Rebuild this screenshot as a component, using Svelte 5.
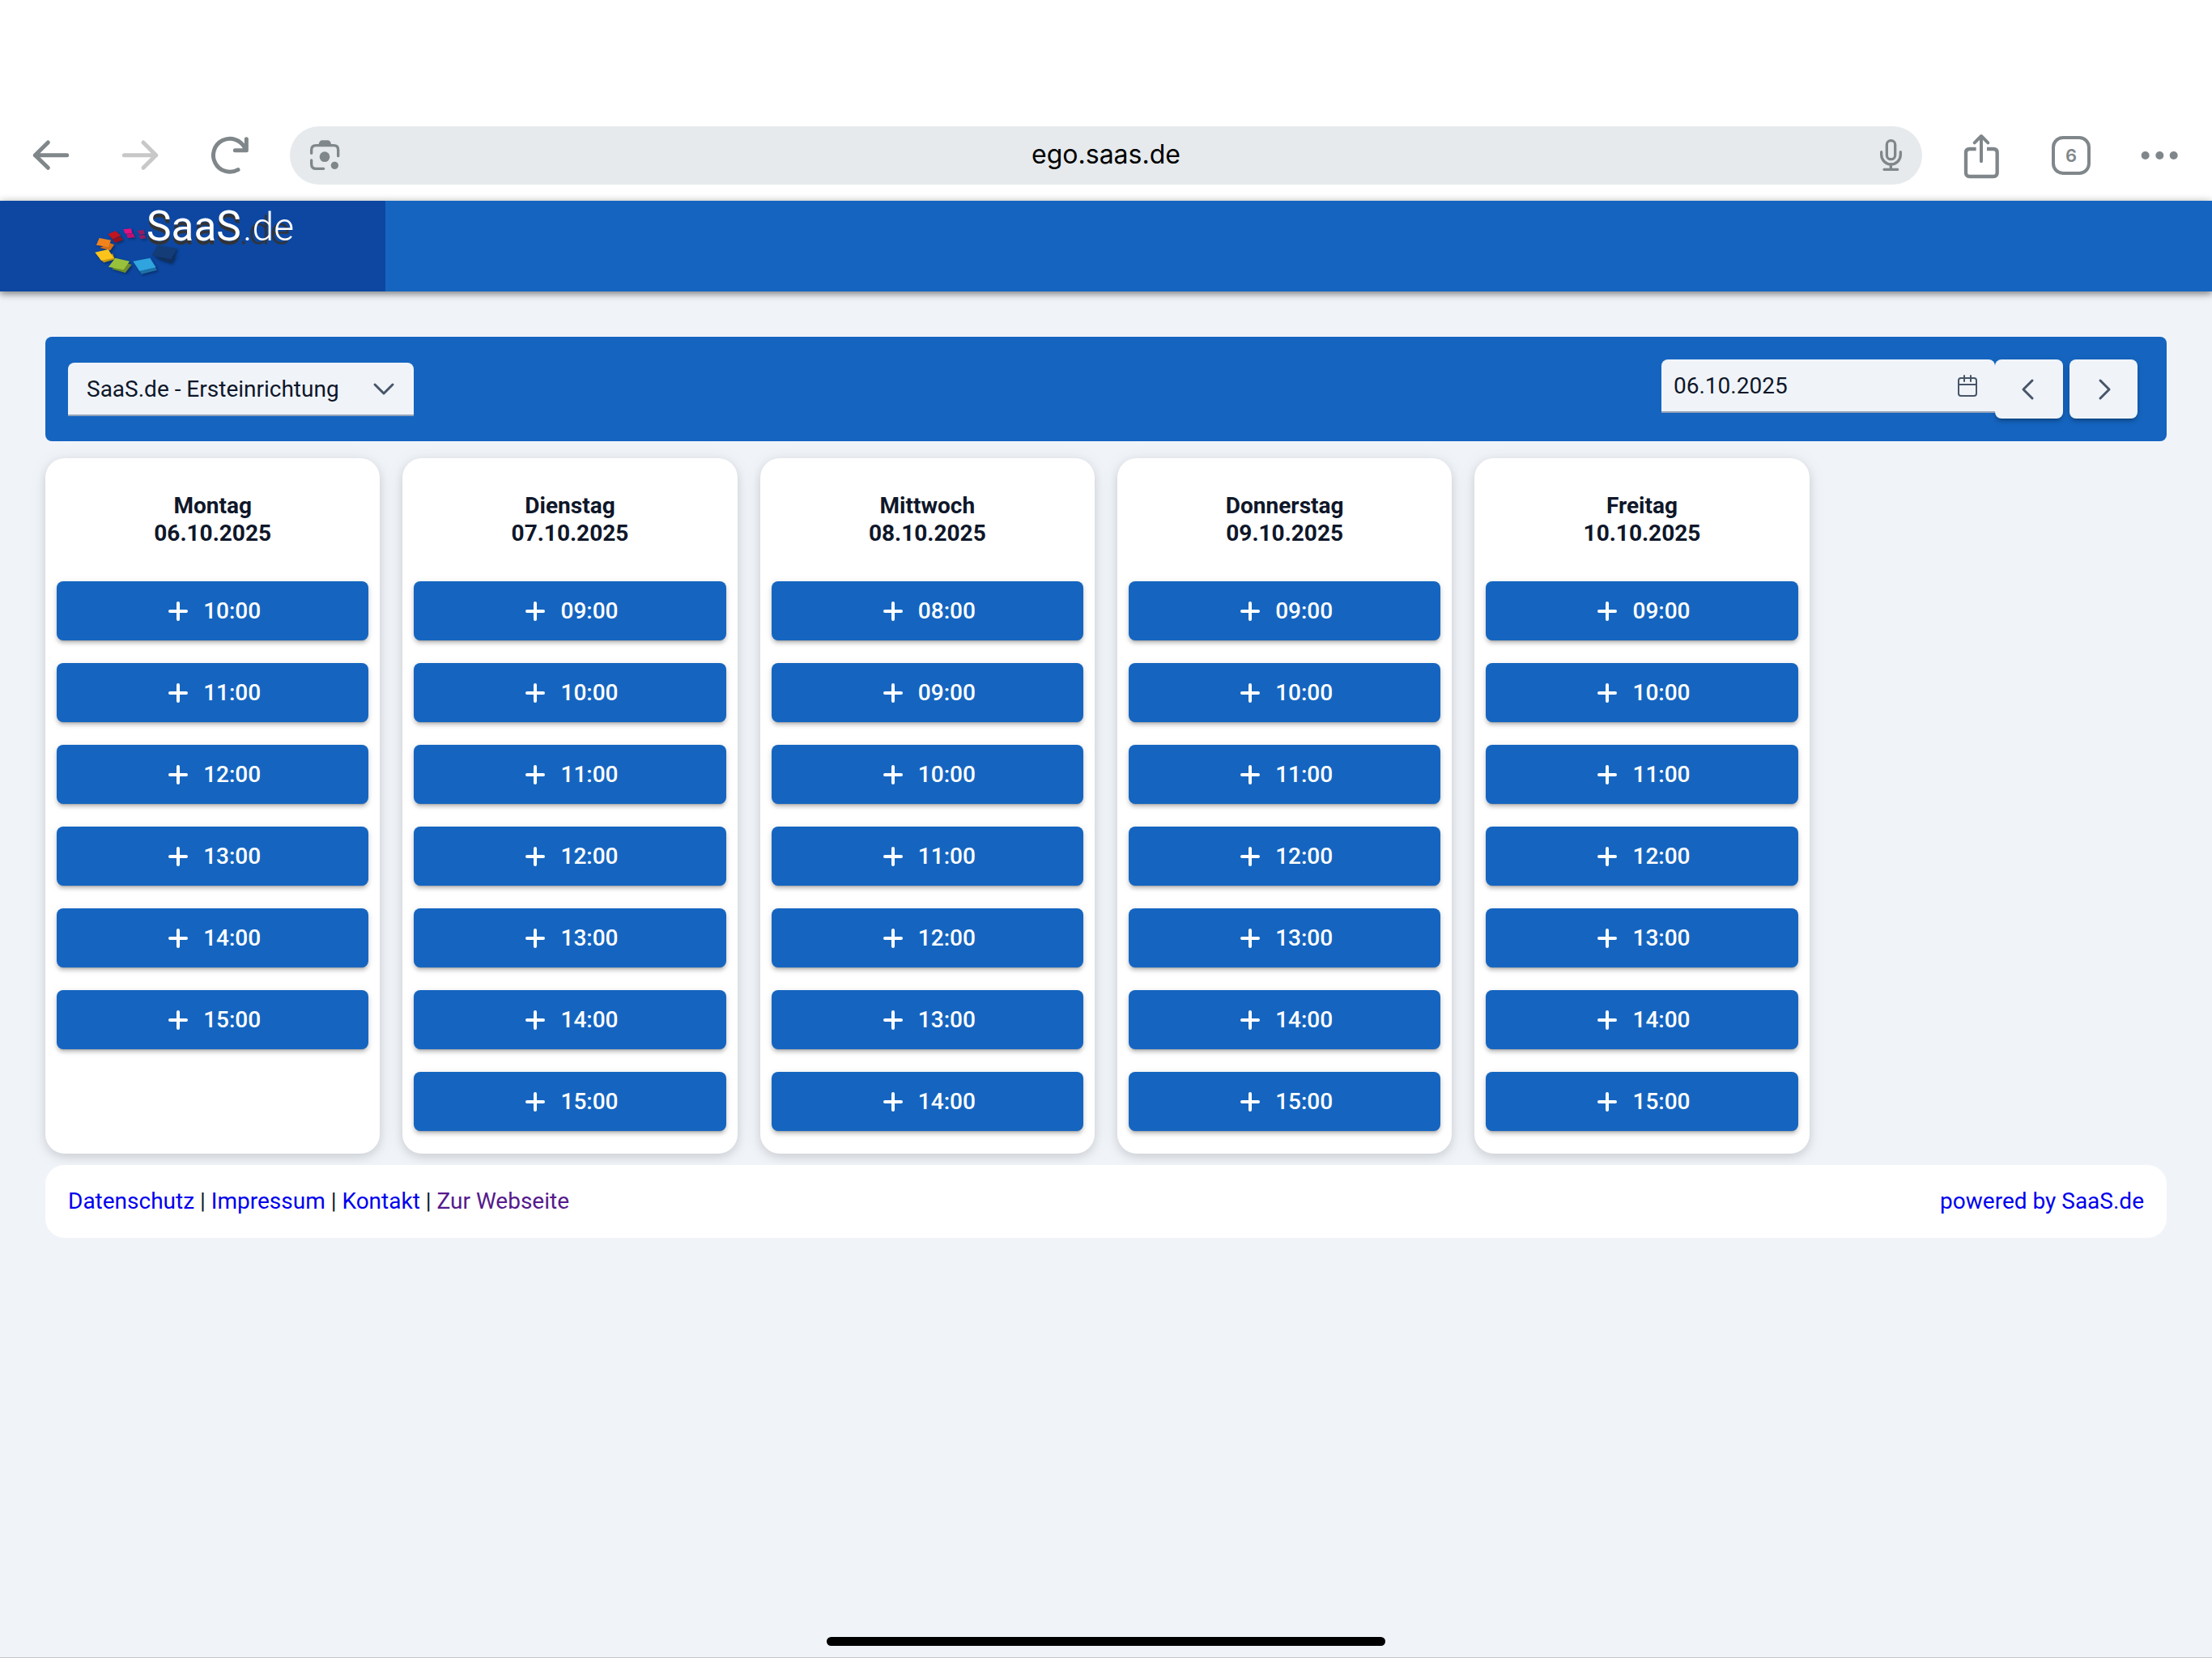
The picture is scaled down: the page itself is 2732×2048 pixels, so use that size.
<script>
  const services = ['SaaS.de - Ersteinrichtung'];
  let service = $state(services[0]);
  let date = $state('06.10.2025');
  let url = $state('ego.saas.de');

  const days = [
    { name: 'Montag', date: '06.10.2025', slots: ['10:00', '11:00', '12:00', '13:00', '14:00', '15:00'] },
    { name: 'Dienstag', date: '07.10.2025', slots: ['09:00', '10:00', '11:00', '12:00', '13:00', '14:00', '15:00'] },
    { name: 'Mittwoch', date: '08.10.2025', slots: ['08:00', '09:00', '10:00', '11:00', '12:00', '13:00', '14:00'] },
    { name: 'Donnerstag', date: '09.10.2025', slots: ['09:00', '10:00', '11:00', '12:00', '13:00', '14:00', '15:00'] },
    { name: 'Freitag', date: '10.10.2025', slots: ['09:00', '10:00', '11:00', '12:00', '13:00', '14:00', '15:00'] }
  ];
</script>

<div class="screen">
  <div class="browser">
    <div class="tools">
      <button class="tool" aria-label="Zurück">
        <svg viewBox="120 84 144 144"><path d="M248 155H130M178 108l-48 47 48 47" /></svg>
      </button>
      <button class="tool off" aria-label="Vorwärts" disabled>
        <svg viewBox="450 84 144 144"><path d="M460 155h118M531 108l47 47-47 47" /></svg>
      </button>
      <button class="tool" aria-label="Neu laden">
        <svg viewBox="780 84 144 144"><path d="M882 209A61.500 61.500 0 1 1 907 128M913 95v42h-42" /></svg>
      </button>
    </div>
    <div class="address">
      <svg class="small" viewBox="1134 96 120 120" aria-hidden="true">
        <path d="M1154 148v-12q0-17 17-17h66q16 0 16 17v22M1154 174v14q0 17 17 17h28" />
        <path class="solid" d="M1180 116q4-16 14-16h20q10 0 14 16z" />
        <circle class="solid" cx="1203" cy="161" r="19" />
        <circle class="solid" cx="1240" cy="193" r="14" />
      </svg>
      <input class="url" type="text" aria-label="Adresse" bind:value={url} />
      <svg class="small" viewBox="162 96 120 120" aria-hidden="true">
        <rect x="211" y="101" width="31" height="69" rx="15" />
        <path d="M191 143v10a35.500 36 0 0 0 71 0v-10M226 189v18M201 208h50" />
      </svg>
    </div>
    <div class="tools">
      <button class="tool" aria-label="Teilen">
        <svg viewBox="492 84 144 144">
          <path class="mid" d="M536 109l25-25 25 25M561 87v91" />
          <path class="butt" d="M542 132h-24q-14 0-14 14v74q0 14 14 14h88q14 0 14-14v-74q0-14-14-14h-24" />
        </svg>
      </button>
      <button class="tool tabs" aria-label="Tabs: 6">6</button>
      <button class="tool" aria-label="Mehr">
        <svg viewBox="1152 84 144 144">
          <circle class="solid" cx="1169" cy="156" r="15" />
          <circle class="solid" cx="1222" cy="156" r="15" />
          <circle class="solid" cx="1274" cy="156" r="15" />
        </svg>
      </button>
    </div>
  </div>

  <header class="top">
    <a class="brand" href="#start" aria-label="SaaS.de">
      <svg class="logo" viewBox="0 324 1428 336">
        <g class="tiles">
          <path fill="#8f1d66" d="M508 434l24-2 5 15-19 3zM514 453l21-3 6 13-20 3z" />
          <path fill="#c40d72" d="M468 446l25-1 7 15-27 2z" />
          <path fill="#e60f80" d="M457 430l29-3 4 17-26 2z" />
          <path fill="#94121e" d="M416 466l29-9 12 12-30 11z" />
          <path fill="#c1151f" d="M400 448l28-12 20 17-31 13z" />
          <path fill="#d56f16" d="M370 498l39-17 14 6-14 21z" />
          <path fill="#f0831d" d="M368 462l43 8-9 26-45-8z" />
          <path fill="#c49a12" d="M370 540l47-20 9 21-41 12z" />
          <path fill="#fcc41b" d="M352 515l49-11 20 32-46 9z" />
          <path fill="#6d8d2c" d="M413 576l60-20 15 5-24 30z" />
          <path fill="#99c23b" d="M427 536l53 12-22 32-56-11z" />
          <path fill="#1d70a5" d="M518 585l57-14 7 10-58 15z" />
          <path fill="#2fa4df" d="M493 548l63-12 22 35-61 14z" />
          <path fill="#10305f" d="M575 537l70-8 12-12-22 39z" />
          <path fill="#143c77" d="M583 489l74 12-24 40-71-15z" />
        </g>
        <text class="saas" x="543" y="470">SaaS</text>
        <text class="de" x="900" y="470">.de</text>
      </svg>
    </a>
  </header>

  <main>
    <section class="filter">
      <div class="field service">
        <select aria-label="Terminart" bind:value={service}>
          {#each services as s}<option>{s}</option>{/each}
        </select>
        <svg class="chevron" viewBox="0 0 28 28" aria-hidden="true"><path d="M3 8l11 11L25 8" /></svg>
      </div>
      <div class="week">
        <div class="field date">
          <input type="text" aria-label="Datum" bind:value={date} />
          <button class="calendar" aria-label="Kalender öffnen">
            <svg viewBox="0 0 28 28">
              <rect x="3" y="5" width="22" height="22" rx="3" />
              <path d="M3 13h22M10 2v7M18 2v7" />
            </svg>
          </button>
        </div>
        <button class="step" aria-label="Vorherige Woche">
          <svg viewBox="0 0 28 28"><path d="M18 3L7 14l11 11" /></svg>
        </button>
        <button class="step" aria-label="Nächste Woche">
          <svg viewBox="0 0 28 28"><path d="M10 3l11 11-11 11" /></svg>
        </button>
      </div>
    </section>

    <section class="days">
      {#each days as day}
        <article class="day">
          <h2>{day.name}<br />{day.date}</h2>
          {#each day.slots as slot}
            <button class="slot">
              <svg viewBox="0 0 34 28" aria-hidden="true"><path d="M17 4v20M7 14h20" /></svg>
              <span>{slot}</span>
            </button>
          {/each}
        </article>
      {/each}
    </section>

    <footer>
      <nav>
        <a href="#datenschutz">Datenschutz</a> | <a href="#impressum">Impressum</a> | <a href="#kontakt">Kontakt</a> |
        <a class="seen" href="#webseite">Zur Webseite</a>
      </nav>
      <a href="#saas">powered by SaaS.de</a>
    </footer>
  </main>

  <div class="home"><div class="pill"></div></div>
</div>

<style>
  :global(body) {
    margin: 0;
  }
  .screen {
    box-sizing: border-box;
    min-height: 100vh;
    display: flex;
    flex-direction: column;
    background: #f0f4f9;
    color: #0f172a;
    font: 400 28px/34px Roboto, sans-serif;
  }
  button,
  input,
  select {
    box-sizing: border-box;
    margin: 0;
    padding: 0;
    border: 0;
    background: none;
    color: inherit;
    font: inherit;
  }
  svg {
    display: block;
    overflow: visible;
    fill: none;
    stroke: currentColor;
    stroke-linecap: round;
    stroke-linejoin: round;
  }

  .browser {
    display: flex;
    align-items: center;
    gap: 50px;
    padding: 156px 40px 20px;
    background: #fff;
    color: #80878a;
  }
  .tools {
    display: flex;
    gap: 62px;
  }
  .tool {
    width: 48px;
    height: 48px;
  }
  .tool svg {
    width: 48px;
    height: 48px;
    stroke-width: 15;
  }
  .off {
    color: #c8c8c8;
  }
  .solid {
    fill: currentColor;
    stroke: none;
  }
  .tool .mid {
    stroke-width: 12;
  }
  .tool .butt {
    stroke-width: 13;
    stroke-linecap: butt;
  }
  .tabs {
    border: 4px solid;
    border-radius: 14px;
    text-align: center;
    font: 600 22px/40px Inter, sans-serif;
  }
  .address {
    flex: 1;
    display: flex;
    align-items: center;
    box-sizing: border-box;
    height: 72px;
    padding: 0 20px;
    border-radius: 36px;
    background: #e6eaed;
  }
  .small {
    width: 40px;
    height: 40px;
    stroke-width: 10;
  }
  .url {
    flex: 1;
    min-width: 0;
    padding-bottom: 2px;
    text-align: center;
    color: #000;
    font: 400 32px/40px Inter, sans-serif;
  }

  .top {
    position: relative;
    display: flex;
    background: #1565c0;
    box-shadow: 0 2px 10px rgba(0, 0, 0, 0.4), 0 4px 6px rgba(0, 0, 0, 0.15);
  }
  .brand {
    display: block;
    background: #0d47a1;
  }
  .logo {
    width: 476px;
    height: 112px;
    stroke: none;
  }
  .tiles {
    filter: drop-shadow(5px 5px 4px rgba(0, 0, 0, 0.35));
  }
  .saas,
  .de {
    fill: #fff;
    font-family: Roboto, sans-serif;
  }
  .saas {
    font-size: 154px;
    filter: drop-shadow(0 14px 0 #333);
  }
  .de {
    font-size: 144px;
    font-weight: 300;
    filter: drop-shadow(-14px 14px 0 #333);
  }

  main {
    padding: 56px 56px 0;
  }
  .filter {
    display: flex;
    justify-content: space-between;
    align-items: center;
    padding: 28px;
    border-radius: 8px;
    background: #1565c0;
  }
  .field {
    position: relative;
    display: flex;
    box-sizing: border-box;
    height: 66px;
    border-bottom: 2px solid #94a3b8;
    border-radius: 8px 8px 0 0;
    background: #f0f4f9;
  }
  .field select,
  .field input {
    padding-top: 2px;
  }
  .service {
    width: 427px;
  }
  .service select {
    appearance: none;
    width: 100%;
    padding-left: 23px;
    padding-right: 70px;
  }
  .chevron {
    position: absolute;
    right: 23px;
    top: 19px;
    width: 28px;
    height: 28px;
    color: #475569;
    stroke-width: 3;
    pointer-events: none;
  }
  .week {
    display: flex;
    align-items: flex-start;
    gap: 8px;
    padding-right: 8px;
  }
  .date {
    width: 412px;
    align-items: center;
    margin-right: -8px;
    padding: 0 20px 0 15px;
  }
  .date input {
    flex: 1;
    min-width: 0;
  }
  .calendar,
  .calendar svg {
    width: 28px;
    height: 28px;
    color: #475569;
    stroke-width: 2;
  }
  .step {
    display: grid;
    place-items: center;
    width: 84px;
    height: 73px;
    border-radius: 8px;
    background: #f0f4f9;
    color: #475569;
    box-shadow: 0 5px 2px -4px rgba(0, 0, 0, 0.2), 0 4px 4px rgba(0, 0, 0, 0.14), 0 2px 9px rgba(0, 0, 0, 0.12);
  }
  .step svg {
    width: 28px;
    height: 28px;
    stroke-width: 3;
  }

  .days {
    display: grid;
    grid-template-columns: repeat(6, 1fr);
    gap: 28px;
    margin-top: 21px;
  }
  .day {
    display: flex;
    flex-direction: column;
    gap: 28px;
    padding: 42px 14px 28px;
    border-radius: 24px;
    background: #fff;
    box-shadow: 0 2px 24px rgba(0, 0, 0, 0.06), 0 4px 12px rgba(0, 0, 0, 0.12);
  }
  h2 {
    margin: 0 0 14px;
    text-align: center;
    font: 700 28px/34px Roboto, sans-serif;
  }
  .slot {
    display: flex;
    justify-content: center;
    align-items: center;
    gap: 14px;
    height: 73px;
    border-radius: 8px;
    background: #1565c0;
    color: #fff;
    font-weight: 500;
    box-shadow: 0 5px 2px -4px rgba(0, 0, 0, 0.2), 0 4px 4px rgba(0, 0, 0, 0.14), 0 2px 9px rgba(0, 0, 0, 0.12);
  }
  .slot svg {
    width: 34px;
    height: 28px;
    stroke-width: 4;
  }

  footer {
    position: relative;
    display: flex;
    justify-content: space-between;
    margin-top: 14px;
    padding: 28px;
    border-radius: 24px;
    background: #fff;
  }
  footer a {
    color: #0000ee;
    text-decoration: none;
  }
  footer .seen {
    color: #551a8b;
  }

  .home {
    margin-top: auto;
    padding: 14px 0 14px;
    border-bottom: 1px solid #c4c6ca;
  }
  .pill {
    width: 690px;
    height: 11px;
    margin: 0 auto;
    border-radius: 6px;
    background: #000;
  }
</style>
